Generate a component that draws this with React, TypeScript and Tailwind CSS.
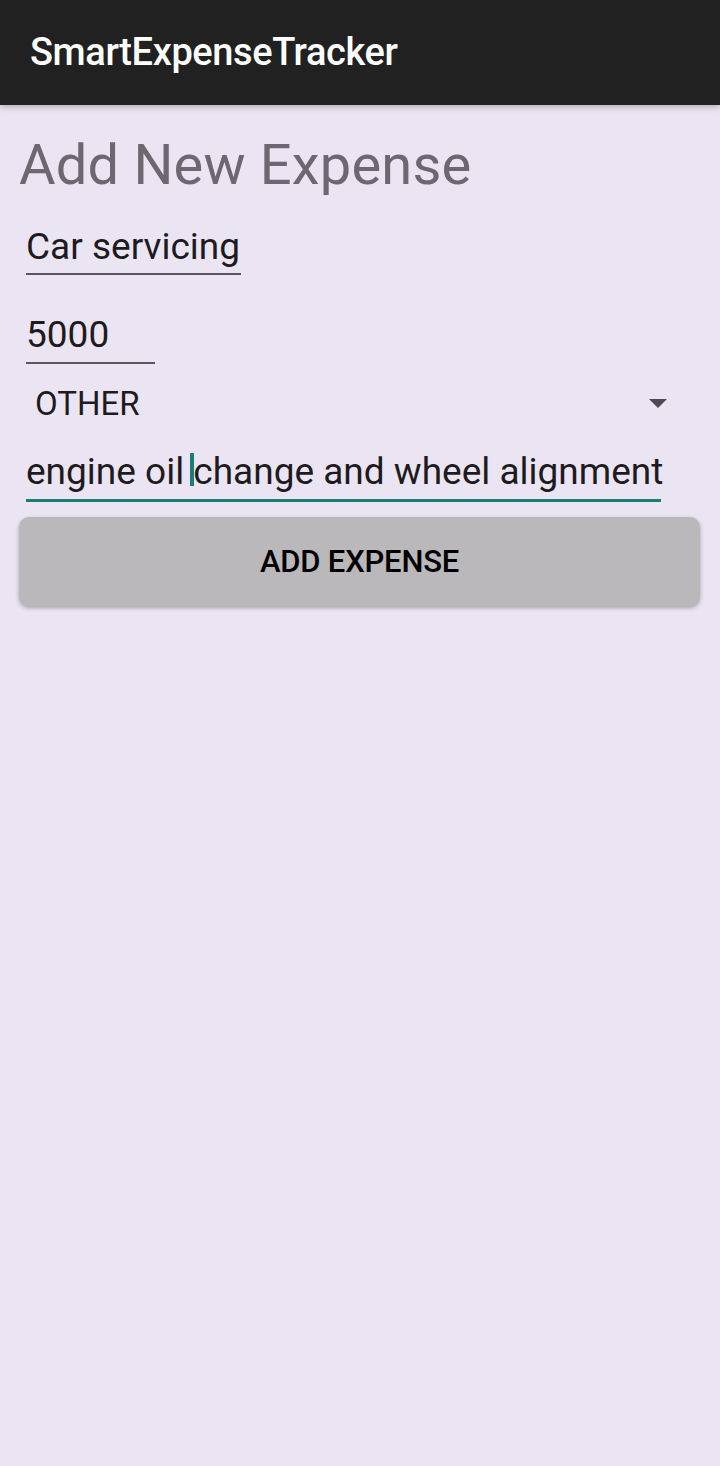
import React from "react";

export default function App() {
  return (
    <div
      className="min-h-[1466px] w-[720px] bg-[#ebe5f3] flex flex-col"
      style={{ fontFamily: "Roboto, 'Noto Sans', sans-serif" }}
    >
      <div className="h-[105px] bg-[#212121] flex items-center pl-[30px] shadow-[0_2px_6px_rgba(0,0,0,0.25)] relative z-10">
        <span className="text-white text-[38px] font-medium tracking-[-0.4px] leading-none pb-[2px]">
          SmartExpenseTracker
        </span>
      </div>
      <div className="flex flex-col px-[19px]">
        <h1 className="text-[#6c6770] text-[56px] leading-none mt-[32px] tracking-[0.2px]">
          Add New Expense
        </h1>
        <div className="mt-[34px] ml-[7px] w-[215px] border-b-2 border-[#5a5660] h-[48px] flex items-end">
          <span className="text-[#1d1b20] text-[37px] leading-none pb-[8px] whitespace-nowrap">Car servicing</span>
        </div>
        <div className="mt-[41px] ml-[7px] w-[129px] border-b-2 border-[#5a5660] h-[48px] flex items-end">
          <span className="text-[#1d1b20] text-[37px] leading-none pb-[9px]">5000</span>
        </div>
        <div className="flex items-center justify-between h-[80px] -mt-[1px] pl-[16px] pr-[34px]">
          <span className="text-[#1d1b20] text-[33px] leading-none">OTHER</span>
          <svg width="18" height="9" viewBox="0 0 18 9">
            <path d="M0 0 L18 0 L9 9 Z" fill="#4d4953" />
          </svg>
        </div>
        <div className="ml-[7px] w-[635px] border-b-[3px] border-[#187f76] h-[60px] flex items-end -mt-[1px]">
          <span className="text-[#1d1b20] text-[37px] leading-none pb-[9px] whitespace-nowrap">
            engine oil{" "}
            <span className="inline-block w-[4px] h-[33px] bg-[#187f76] align-[-2px] -ml-[3px] mr-[-1px]"></span>
            change and wheel alignment
          </span>
        </div>
        <button className="mt-[15px] h-[89px] w-[681px] rounded-[10px] bg-[#bab8bb] shadow-[0_2px_4px_rgba(0,0,0,0.3)] flex items-center justify-center">
          <span className="text-black text-[31px] font-medium leading-none tracking-[-0.2px]">ADD EXPENSE</span>
        </button>
      </div>
    </div>
  );
}
